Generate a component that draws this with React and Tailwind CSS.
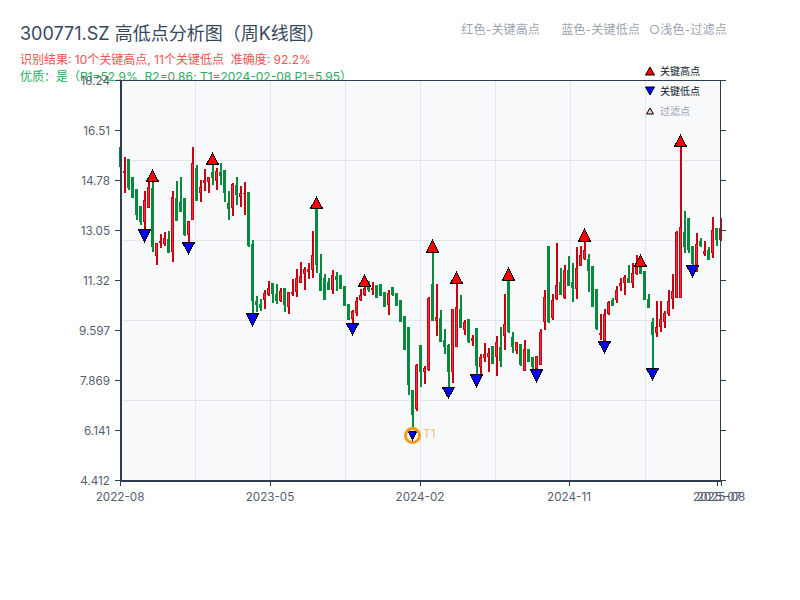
import React from 'react';

// [colour, wick top, wick bottom, body top, body bottom], one row per week
const candles = [
  ['g',147,167,147,167],['r',157,193,171,173],['g',159,190,159,188],['g',177,198,177,198],['g',189,220,189,215],
  ['g',206,225,206,222],['r',191,230,200,222],['r',182,208,187,208],['g',182,252,188,247],['r',243,265,243,256],
  ['r',234,248,241,243],['r',232,246,238,244],['g',231,253,239,253],['r',191,262,197,252],['g',181,221,198,221],
  ['g',177,212,202,212],['g',198,236,198,235],['r',221,245,221,235],['r',147,220,163,220],['g',165,201,168,201],
  ['r',180,202,187,193],['r',169,191,180,183],['r',177,193,177,182],['g',165,185,172,178],['r',168,190,171,181],
  ['g',163,185,172,176],['g',170,202,170,193],['g',191,220,203,209],['r',183,216,184,208],['g',177,205,185,195],
  ['r',186,207,193,197],['r',182,215,193,194],['g',192,247,192,246],['g',240,313,244,301],['g',296,312,301,305],
  ['g',299,311,304,308],['r',290,309,293,300],['r',281,296,288,295],['g',283,303,283,294],['g',284,304,294,301],
  ['r',288,302,291,301],['g',288,312,288,305],['r',292,314,292,307],['r',279,296,292,294],['r',269,297,278,292],
  ['r',262,283,276,283],['r',267,290,269,274],['r',263,279,269,272],['r',231,278,255,270],['g',209,273,209,265],
  ['g',254,291,273,291],['g',274,300,278,300],['g',278,290,282,290],['r',270,294,275,290],['g',272,291,276,280],
  ['g',275,289,275,289],['g',286,306,286,306],['g',304,320,304,320],['r',310,323,311,319],['r',297,316,301,313],
  ['r',289,301,295,300],['r',287,296,288,295],['g',281,292,281,290],['r',282,295,288,290],['g',285,298,285,298],
  ['g',284,296,284,296],['g',292,307,292,307],['r',290,315,293,305],['g',287,296,287,295],['g',293,306,293,306],
  ['g',300,322,300,322],['g',316,350,316,350],['g',327,395,327,385],['g',390,428,390,415],['r',364,411,365,409],
  ['g',345,387,345,372],['r',366,384,368,372],['r',297,371,298,370],['g',253,321,284,321],['r',284,336,317,321],
  ['g',310,342,318,342],['g',329,354,340,347],['g',344,387,345,372],['r',309,383,309,372],['r',284,347,307,347],
  ['g',295,328,309,328],['r',320,335,322,330],['g',319,343,319,342],['r',335,346,338,341],['g',328,374,328,366],
  ['r',354,374,357,367],['r',343,362,354,358],['r',348,372,353,357],['g',346,364,346,364],['r',336,376,342,357],
  ['g',327,367,347,361],['r',294,350,324,336],['g',281,333,281,332],['g',332,353,337,347],['r',342,354,342,351],
  ['g',344,366,344,365],['r',340,371,349,371],['g',349,362,349,362],['g',357,373,357,367],['r',356,369,356,369],
  ['r',329,365,332,365],['r',290,330,297,322],['g',246,323,246,322],['r',294,320,300,318],['r',243,300,285,299],
  ['g',268,295,282,295],['r',265,299,270,298],['g',256,286,270,286],['g',263,302,282,288],['r',247,299,268,289],
  ['r',246,266,255,266],['r',242,260,250,259],['g',254,292,259,271],['g',266,307,266,307],['g',289,330,289,329],
  ['r',314,340,333,335],['r',309,341,314,341],['r',301,315,302,314],['g',298,306,300,306],['r',286,303,290,300],
  ['r',278,291,283,286],['r',275,295,277,283],['g',265,283,278,283],['r',263,288,273,283],['r',255,275,267,274],
  ['g',267,274,267,274],['g',271,300,271,300],['g',294,308,299,308],['g',318,368,322,335],['r',301,337,327,333],
  ['r',301,332,319,327],['r',311,328,313,322],['r',290,316,301,314],['r',274,309,291,299],['r',231,298,232,298],
  ['r',147,298,227,298],['g',211,253,232,247],['g',218,253,218,250],['g',246,265,246,264],['r',233,272,244,265],
  ['g',238,247,241,246],['r',241,256,251,254],['g',247,260,250,260],['r',217,258,230,253],['g',228,246,228,240],
  ['r',218,241,228,240],
];

const highs = [[152,170,182],[212,153,165],[316,197,209],[364,275,287],[432,240,253],[456,272,284],[508,268,281],[584,229,242],[640,255,267],[680,135,147]];
const lows = [[144,229,242],[188,242,254],[252,313,326],[352,323,335],[448,387,398],[476,374,387],[536,369,382],[604,341,353],[652,368,380],[692,265,277]];

const yLabels = ['18.24','16.51','14.78','13.05','11.32','9.597','7.869','6.141','4.412'];
const xLabels = [[120,'2022-08'],[270,'2023-05'],[420,'2024-02'],[569,'2024-11'],[717,'2025-07'],[721,'2025-08']];

const Candle = ({ c, i }) => {
  const x = 120 + 4 * i;
  const dark = c[0] === 'r' ? '#c9000e' : '#068a3b';
  return (
    <g>
      <rect x={x} y={c[1]} width="2" height={c[2] - c[1]} fill={dark} />
      <rect x={x - 1} y={c[3]} width="3" height={c[4] - c[3]} fill={dark} />
      {c[0] === 'r' && <rect x={x} y={c[3] + 1} width="1" height={Math.max(c[4] - c[3] - 2, 0)} fill="#f0303c" />}
    </g>
  );
};

const Chart = () => (
  <svg width="800" height="530" viewBox="0 70 800 530" className="relative block shrink-0 font-['Inter',sans-serif]">
    <rect x="121" y="80" width="600" height="401" fill="#f8f9fb" />
    {[195, 270, 345, 420, 495, 570, 645].map((x) => (
      <rect key={x} x={x} y="81" width="1" height="400" fill="#e2e5ea" />
    ))}
    {[160, 240, 320, 400].map((y) => (
      <rect key={y} x="121" y={y} width="600" height="1" fill="#e2e5ea" />
    ))}
    {candles.map((c, i) => (
      <Candle key={i} c={c} i={i} />
    ))}
    <g stroke="#000" strokeWidth="1" shapeRendering="crispEdges">
      {highs.map(([x, top, base]) => (
        <polygon key={x} points={`${x + 0.5},${top} ${x + 6.5},${base - 0.5} ${x - 5.5},${base - 0.5}`} fill="#ff0000" />
      ))}
      {lows.map(([x, base, tip]) => (
        <polygon key={x} points={`${x - 5.5},${base + 0.5} ${x + 6.5},${base + 0.5} ${x + 0.5},${tip}`} fill="#0000ff" />
      ))}
      <polygon points="408.5,431.5 416.5,431.5 412.5,440.5" fill="#0000ff" />
    </g>
    <circle cx="412.5" cy="435.5" r="7" fill="none" stroke="#f39c12" strokeWidth="3" />
    <text x="423" y="438" fontSize="12" fill="#f39c12" fillOpacity="0.6">T1</text>

    <g fill="#2c3e50">
      <rect x="120" y="80" width="601" height="1" />
      <rect x="120" y="80" width="2" height="402" />
      <rect x="120" y="480" width="602" height="2" />
      <rect x="720" y="80" width="1" height="402" />
      {yLabels.map((l, i) => (
        <g key={l}>
          <rect x="115" y={80 + i * 50} width="5" height="1" />
          <rect x="721" y={80 + i * 50} width="5" height="1" />
        </g>
      ))}
      {xLabels.map(([x]) => (
        <rect key={x} x={x} y="482" width="1" height="4" />
      ))}
    </g>
    <g fill="#55606f" fontSize="11.7">
      {yLabels.map((l, i) => (
        <text key={l} x="110" y={85 + i * 50} textAnchor="end">{l}</text>
      ))}
      {xLabels.map(([x, l]) => (
        <text key={l} x={x} y="501" textAnchor="middle">{l}</text>
      ))}
    </g>
  </svg>
);

const LegendRow = ({ label, muted, children }) => (
  <div className={`flex items-center gap-[5px] h-[20px] text-[10px] ${muted ? 'text-[#9ca3af]' : 'text-[#111827]'}`}>
    <svg width="10" height="10" viewBox="0 0 10 10" className="shrink-0">{children}</svg>
    <span>{label}</span>
  </div>
);

export default function App() {
  return (
    <div className="relative w-[800px] h-[600px] bg-white overflow-hidden font-['Inter','Noto_Sans_CJK_SC',sans-serif]">
      <div className="h-[70px] px-5 pt-[22px]">
        <div className="flex items-start justify-between pr-[53px]">
          <h1 className="text-[18px] leading-6 font-normal text-[#34495e]">300771.SZ 高低点分析图（周K线图）</h1>
          <div className="flex gap-[9px] text-[12px] leading-4 tracking-[0.2px] text-[#9ca3af]">
            <span className="mr-[12px]">红色-关键高点</span>
            <span>蓝色-关键低点</span>
            <span>○浅色-过滤点</span>
          </div>
        </div>
        <p className="mt-[5px] text-[12px] leading-[17px] text-[#ef5350]">识别结果: 10个关键高点, 11个关键低点&nbsp;&nbsp;准确度: 92.2%</p>
        <p className="text-[12px] leading-[17px] text-[#27ae60]">优质：是（R1=52.9%, R2=0.86; T1=2024-02-08 P1=5.95）</p>
      </div>
      <Chart />
      <div className="absolute left-[645px] top-[61px] flex flex-col">
        <LegendRow label="关键高点">
          <polygon points="5,1 9.5,9 0.5,9" fill="#ff0000" stroke="#000" />
        </LegendRow>
        <LegendRow label="关键低点">
          <polygon points="0.5,1 9.5,1 5,9" fill="#0000ff" stroke="#000" />
        </LegendRow>
        <LegendRow label="过滤点" muted>
          <polygon points="5,2 8.5,8 1.5,8" fill="#ffc9c9" stroke="#000" />
        </LegendRow>
      </div>
    </div>
  );
}
